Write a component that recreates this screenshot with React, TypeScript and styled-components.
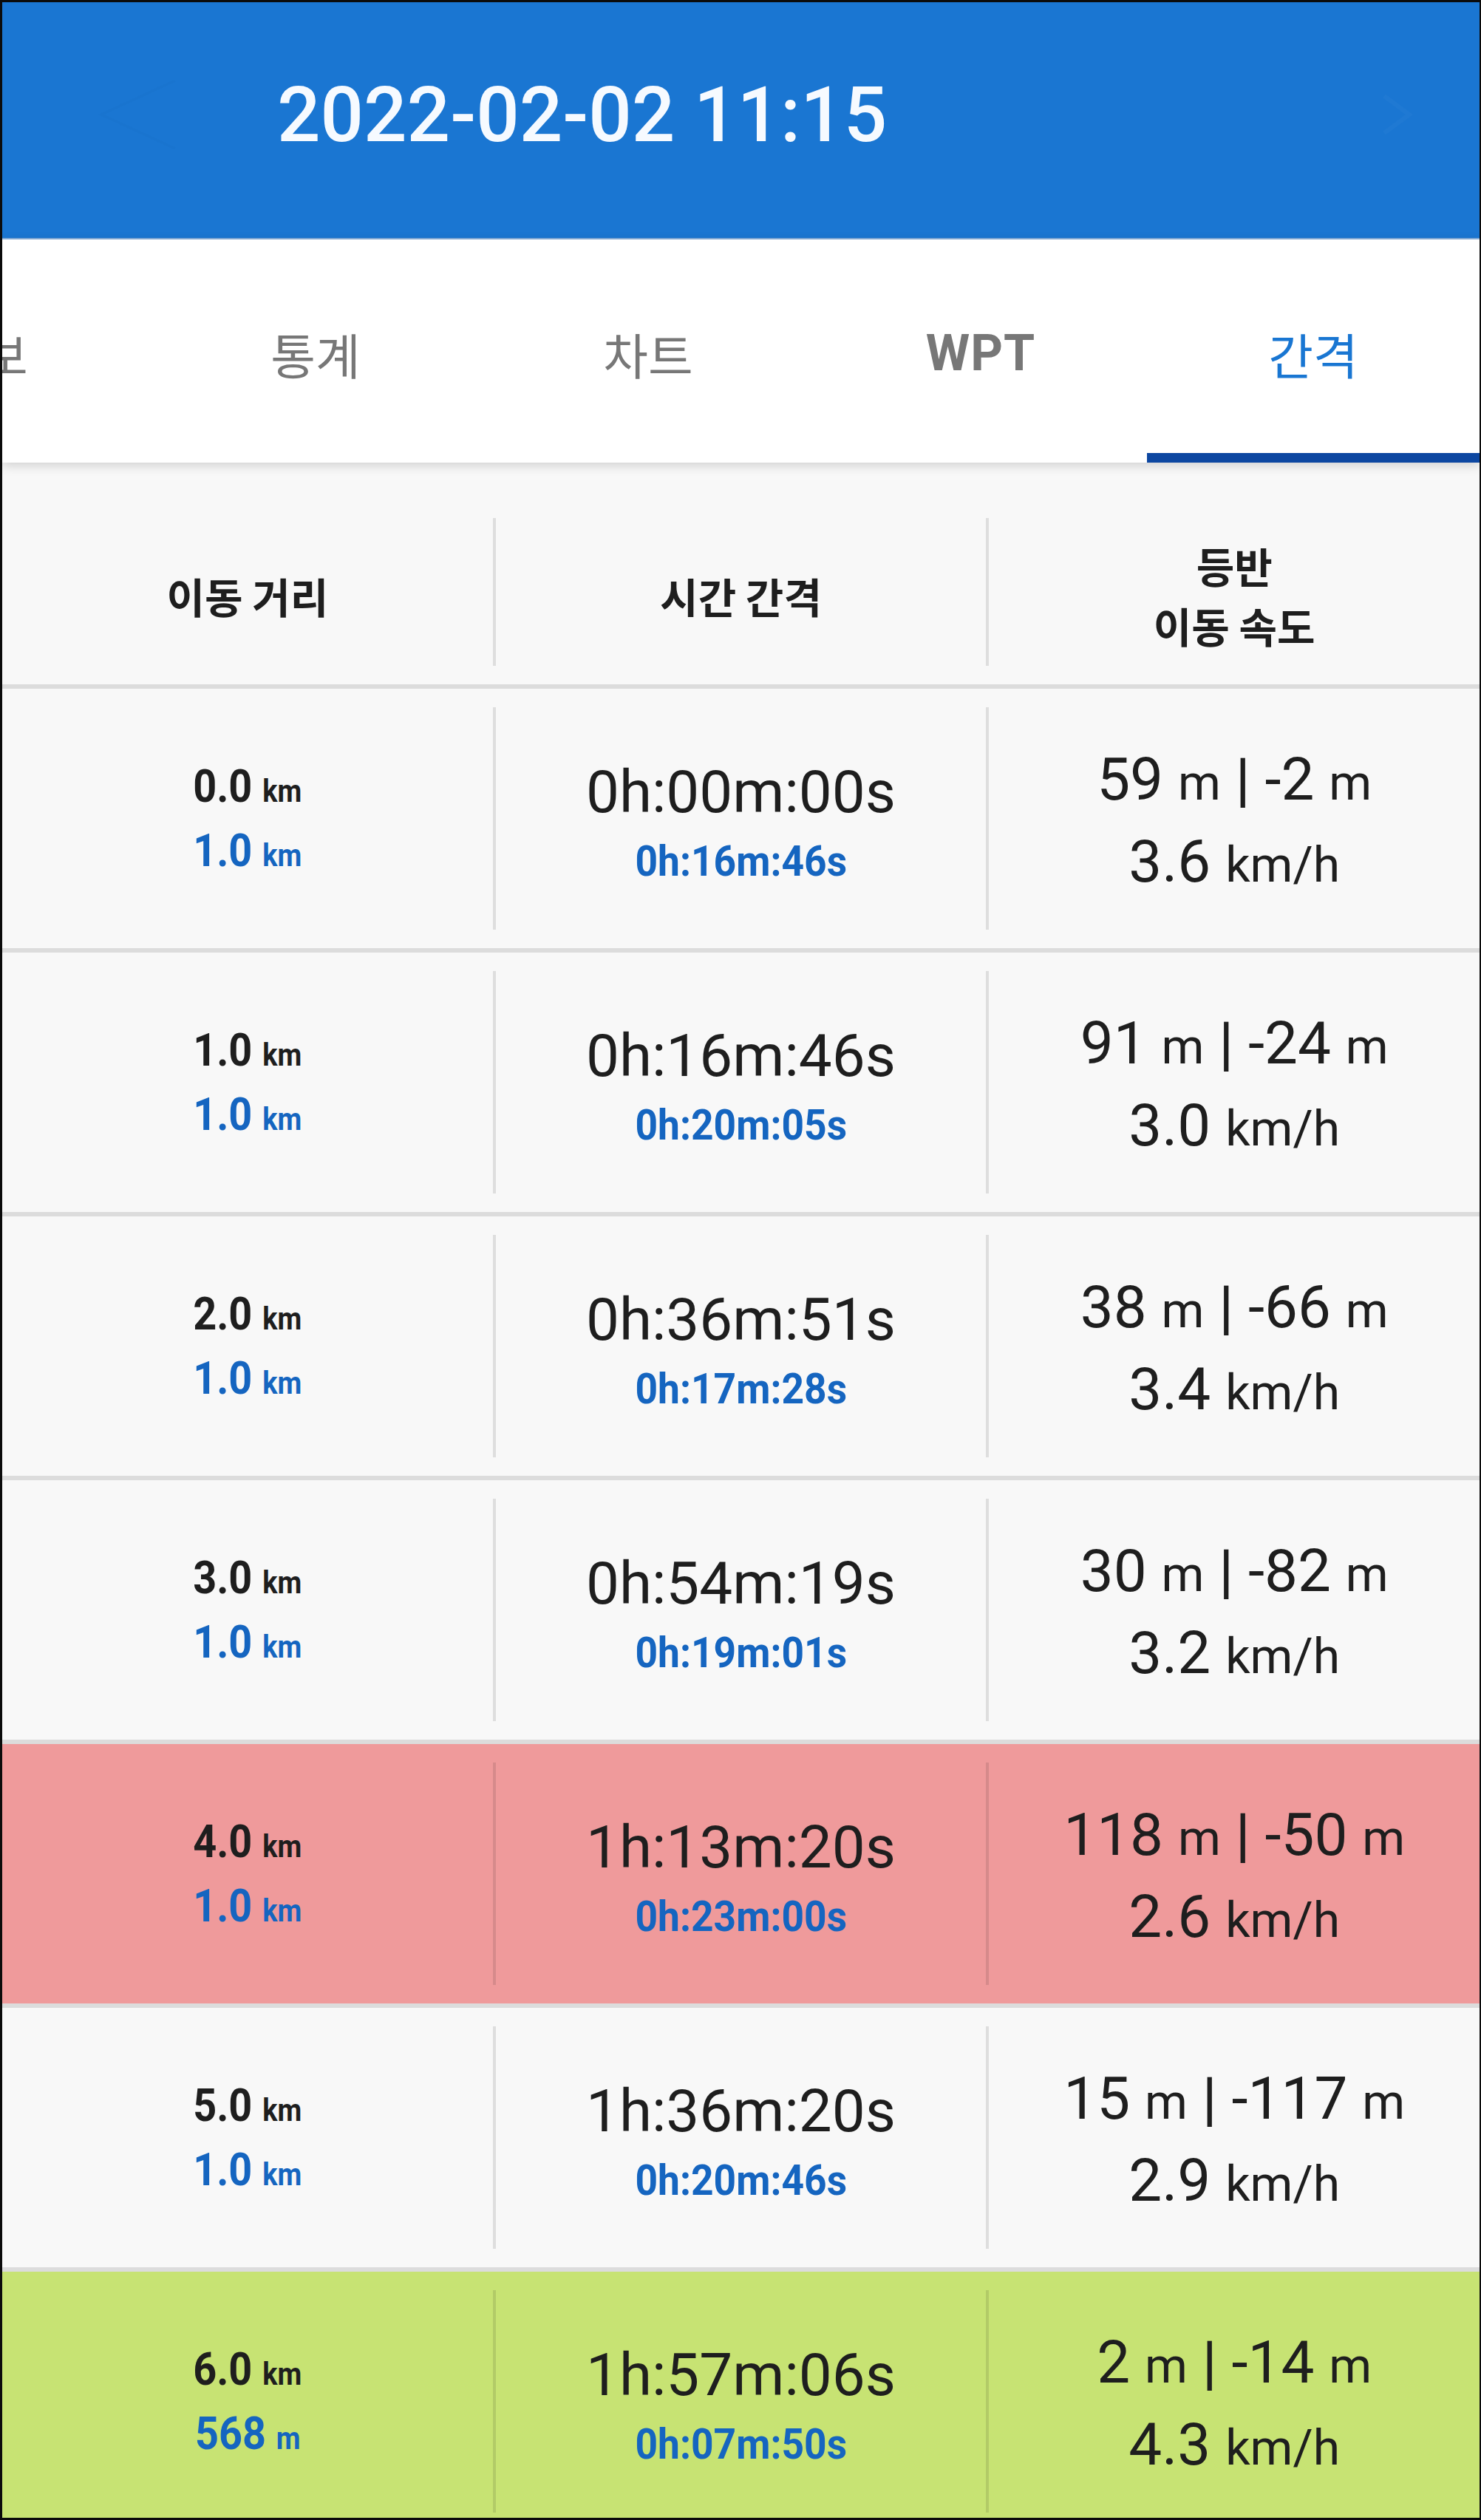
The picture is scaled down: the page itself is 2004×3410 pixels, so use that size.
import React from 'react';
import styled, { createGlobalStyle } from 'styled-components';

const GlobalStyle = createGlobalStyle`
  html, body {
    margin: 0;
    padding: 0;
    background: #000;
  }
  body {
    font-family: Roboto, "Noto Sans CJK KR", sans-serif;
    -webkit-font-smoothing: antialiased;
  }
`;

const Frame = styled.div`
  width: 2004px;
  height: 3410px;
  box-sizing: border-box;
  border-style: solid;
  border-color: #0b0b0b;
  border-width: 3px 2px 3px 3px;
  background: #f8f8f8;
  overflow: hidden;
  display: flex;
  flex-direction: column;
`;

const AppBar = styled.header`
  height: 321px;
  flex-shrink: 0;
  box-sizing: border-box;
  background: #1a76d2;
  border-bottom: 2px solid #86afdb;
  padding-bottom: 15px;
  display: flex;
  align-items: center;
`;

const NavArrow = styled.svg<{ $side: 'left' | 'right' }>`
  flex-shrink: 0;
  margin-left: ${p => (p.$side === 'left' ? '124px' : 'auto')};
  margin-right: ${p => (p.$side === 'right' ? '89px' : '0')};
`;

const Title = styled.h1`
  margin: 0 0 0 135px;
  font-family: Roboto, sans-serif;
  font-weight: 500;
  font-size: 103px;
  color: #f6faff;
  white-space: nowrap;
`;

const TabBar = styled.nav`
  height: 302px;
  flex-shrink: 0;
  background: #fff;
  position: relative;
  z-index: 1;
  box-shadow: 0 4px 14px rgba(0, 0, 0, 0.16);
  overflow: hidden;
`;

const TabStrip = styled.div`
  display: flex;
  height: 100%;
  margin-left: -251px;
`;

const Tab = styled.div<{ $active?: boolean; $latin?: boolean }>`
  width: 450px;
  flex-shrink: 0;
  box-sizing: border-box;
  padding-top: 6px;
  display: flex;
  align-items: center;
  justify-content: center;
  font-family: ${p => (p.$latin ? 'Roboto, sans-serif' : '"Noto Sans CJK KR", sans-serif')};
  font-weight: ${p => (p.$latin ? 700 : 400)};
  font-size: ${p => (p.$latin ? '68px' : '66px')};
  letter-spacing: ${p => (p.$latin ? '1px' : '0')};
  color: ${p => (p.$active ? '#1976d2' : '#777777')};
  box-shadow: ${p => (p.$active ? 'inset 0 -13px 0 #0d47a1' : 'none')};
`;

const Table = styled.section`
  margin-top: 50px;
  display: flex;
  flex-direction: column;
  flex-shrink: 0;
`;

const HeadRow = styled.div`
  height: 256px;
  box-sizing: border-box;
  border-bottom: 6px solid #dcdcdc;
  display: flex;
`;

const Row = styled.div<{ $bg: string }>`
  height: 357px;
  flex-shrink: 0;
  box-sizing: border-box;
  border-bottom: 6px solid #dcdcdc;
  background: ${p => p.$bg};
  display: flex;
`;

const Divider = styled.div`
  width: 4px;
  flex-shrink: 0;
  margin: 25px 0;
  background: rgba(0, 0, 0, 0.1);
`;

const Cell = styled.div<{ $shift?: number }>`
  flex: 1;
  min-width: 0;
  box-sizing: border-box;
  padding-top: ${p => p.$shift ?? 0}px;
  display: flex;
  flex-direction: column;
  align-items: center;
  justify-content: center;
`;

const HeadLabel = styled.div`
  font-family: "Noto Sans CJK KR", sans-serif;
  font-weight: 700;
  font-size: 56px;
  line-height: 81px;
  color: #1e1e1e;
  text-align: center;
`;

const DistLine = styled.div<{ $blue?: boolean }>`
  font-weight: 700;
  font-size: 62px;
  line-height: 80px;
  white-space: nowrap;
  color: ${p => (p.$blue ? '#1565c0' : '#1e1e1e')};
  transform: scaleX(0.9);
`;

const DistUnit = styled.span`
  font-size: 42px;
`;

const TimeMain = styled.div`
  font-weight: 400;
  font-size: 80px;
  line-height: 96px;
  white-space: nowrap;
  color: #1e1e1e;
`;

const TimeLap = styled.div`
  font-weight: 700;
  font-size: 58px;
  line-height: 91px;
  white-space: nowrap;
  color: #1565c0;
  transform: scaleX(0.92);
`;

const ClimbLine = styled.div`
  font-weight: 400;
  font-size: 80px;
  line-height: 107px;
  white-space: nowrap;
  color: #1e1e1e;
`;

const Unit = styled.span`
  font-size: 66px;
`;

const Bar = styled.span`
  font-weight: 500;
`;

type Lap = {
  dist: string;
  seg: string;
  segUnit: string;
  time: string;
  lap: string;
  up: string;
  down: string;
  speed: string;
  tone?: 'slow' | 'fast';
};

const laps: Lap[] = [
  { dist: '0.0', seg: '1.0', segUnit: 'km', time: '0h:00m:00s', lap: '0h:16m:46s', up: '59', down: '-2', speed: '3.6' },
  { dist: '1.0', seg: '1.0', segUnit: 'km', time: '0h:16m:46s', lap: '0h:20m:05s', up: '91', down: '-24', speed: '3.0' },
  { dist: '2.0', seg: '1.0', segUnit: 'km', time: '0h:36m:51s', lap: '0h:17m:28s', up: '38', down: '-66', speed: '3.4' },
  { dist: '3.0', seg: '1.0', segUnit: 'km', time: '0h:54m:19s', lap: '0h:19m:01s', up: '30', down: '-82', speed: '3.2' },
  { dist: '4.0', seg: '1.0', segUnit: 'km', time: '1h:13m:20s', lap: '0h:23m:00s', up: '118', down: '-50', speed: '2.6', tone: 'slow' },
  { dist: '5.0', seg: '1.0', segUnit: 'km', time: '1h:36m:20s', lap: '0h:20m:46s', up: '15', down: '-117', speed: '2.9' },
  { dist: '6.0', seg: '568', segUnit: 'm', time: '1h:57m:06s', lap: '0h:07m:50s', up: '2', down: '-14', speed: '4.3', tone: 'fast' },
];

const toneBg = (tone?: Lap['tone']) =>
  tone === 'slow' ? '#ef9a9b' : tone === 'fast' ? '#c7e373' : '#f8f8f8';

const tabs = [
  { label: '정보' },
  { label: '통계' },
  { label: '차트' },
  { label: 'WPT', latin: true },
  { label: '간격', active: true },
];

export default function App() {
  return (
    <>
      <GlobalStyle />
      <Frame>
        <AppBar>
          <NavArrow $side="left" width="113" height="100" viewBox="0 0 113 100">
            <polyline points="110,4 10,50 110,96" fill="none" stroke="rgba(0,0,0,0.012)" strokeWidth="4" />
          </NavArrow>
          <Title>2022-02-02 11:15</Title>
          <NavArrow $side="right" width="46" height="58" viewBox="0 0 46 58">
            <polyline points="6,4 40,29 6,54" fill="none" stroke="rgba(255,255,255,0.025)" strokeWidth="6" />
          </NavArrow>
        </AppBar>

        <TabBar>
          <TabStrip>
            {tabs.map(t => (
              <Tab key={t.label} $active={t.active} $latin={t.latin}>
                {t.label}
              </Tab>
            ))}
          </TabStrip>
        </TabBar>

        <Table>
          <HeadRow>
            <Cell $shift={8}>
              <HeadLabel>이동 거리</HeadLabel>
            </Cell>
            <Divider />
            <Cell $shift={8}>
              <HeadLabel>시간 간격</HeadLabel>
            </Cell>
            <Divider />
            <Cell $shift={8}>
              <HeadLabel>
                등반
                <br />
                이동 속도
              </HeadLabel>
            </Cell>
          </HeadRow>

          {laps.map(l => (
            <Row key={l.dist} $bg={toneBg(l.tone)}>
              <Cell $shift={6}>
                <DistLine>
                  {l.dist} <DistUnit>km</DistUnit>
                </DistLine>
                <DistLine $blue>
                  {l.seg} <DistUnit>{l.segUnit}</DistUnit>
                </DistLine>
              </Cell>
              <Divider />
              <Cell $shift={20}>
                <TimeMain>{l.time}</TimeMain>
                <TimeLap>{l.lap}</TimeLap>
              </Cell>
              <Divider />
              <Cell $shift={10}>
                <ClimbLine>
                  {l.up} <Unit>m</Unit> <Bar>|</Bar> {l.down} <Unit>m</Unit>
                </ClimbLine>
                <ClimbLine>
                  {l.speed} <Unit>km/h</Unit>
                </ClimbLine>
              </Cell>
            </Row>
          ))}
        </Table>
      </Frame>
    </>
  );
}
